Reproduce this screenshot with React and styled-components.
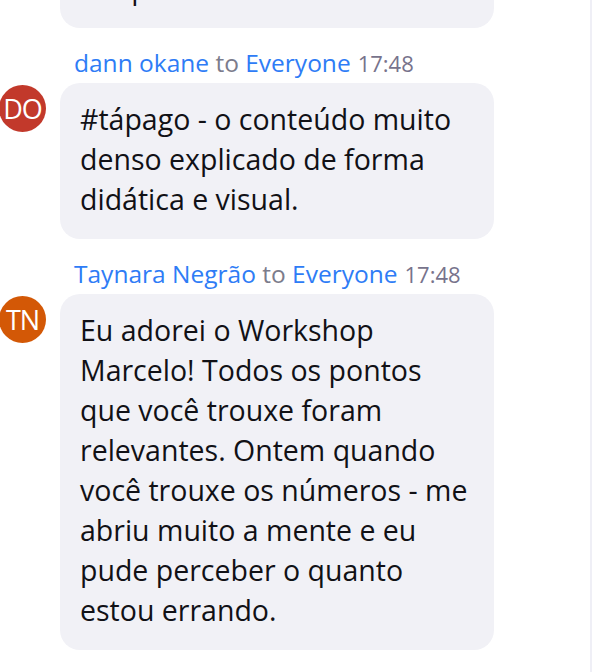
import React from "react";
import styled, { createGlobalStyle } from "styled-components";

const Global = createGlobalStyle`
  html, body { margin: 0; padding: 0; background: #ffffff; overflow: hidden; }
  body { font-family: "Open Sans", "Noto Sans", sans-serif; }
`;

const Page = styled.div`
  display: flex;
  width: 592px;
  height: 672px;
  overflow: hidden;
`;

const Feed = styled.div`
  flex: 1;
  display: flex;
  flex-direction: column;
  margin-top: -128px;
`;

const Track = styled.div`
  width: 2px;
  background: #efeff6;
`;

const Message = styled.div`
  display: grid;
  grid-template-columns: 60px 434px;
  grid-template-rows: auto auto;
  margin-bottom: 20px;
`;

const Header = styled.div`
  grid-column: 2;
  padding-left: 14px;
  height: 30px;
  line-height: 30px;
  margin-bottom: 5px;
  font-size: 24.5px;
  color: #7c7c8c;
  white-space: nowrap;
`;

const Name = styled.span`
  color: #2e7cf6;
`;

const Time = styled.span`
  color: #77738c;
  font-size: 22px;
  margin-left: 7px;
`;

const Avatar = styled.div`
  grid-column: 1;
  grid-row: 2;
  width: 47px;
  height: 47px;
  margin-top: 2px;
  margin-left: -1px;
  border-radius: 50%;
  background: ${(p) => p.$color};
  color: #ffffff;
  font-size: 27px;
  display: flex;
  align-items: center;
  justify-content: center;
  letter-spacing: -1px;
`;

const Bubble = styled.div`
  grid-column: 2;
  grid-row: 2;
  background: #f1f1f6;
  border-radius: 20px;
  padding: 16px 20px 20px 20px;
  font-size: 28.5px;
  line-height: 40px;
  color: #111116;
`;

const Line = styled.div`
  white-space: nowrap;
`;

const messages = [
  {
    initials: "",
    color: "transparent",
    lines: ["Muito bom o conteúdo,", "gostei bastante, foi", "um prazer."],
    noHeader: true,
  },
  {
    name: "dann okane",
    initials: "DO",
    color: "#c2392b",
    lines: ["#tápago - o conteúdo muito", "denso explicado de forma", "didática e visual."],
  },
  {
    name: "Taynara Negrão",
    initials: "TN",
    color: "#d35806",
    lines: [
      "Eu adorei o Workshop",
      "Marcelo! Todos os pontos",
      "que você trouxe foram",
      "relevantes. Ontem quando",
      "você trouxe os números - me",
      "abriu muito a mente e eu",
      "pude perceber o quanto",
      "estou errando.",
    ],
  },
];

export default function App() {
  return (
    <>
      <Global />
      <Page>
        <Feed>
          {messages.map((m, i) => (
            <Message key={i}>
              {!m.noHeader && (
                <Header>
                  <Name>{m.name}</Name> to <Name>Everyone</Name>
                  <Time>17:48</Time>
                </Header>
              )}
              {m.initials && <Avatar $color={m.color}>{m.initials}</Avatar>}
              <Bubble>
                {m.lines.map((l, j) => (
                  <Line key={j}>{l}</Line>
                ))}
              </Bubble>
            </Message>
          ))}
        </Feed>
        <Track />
      </Page>
    </>
  );
}
